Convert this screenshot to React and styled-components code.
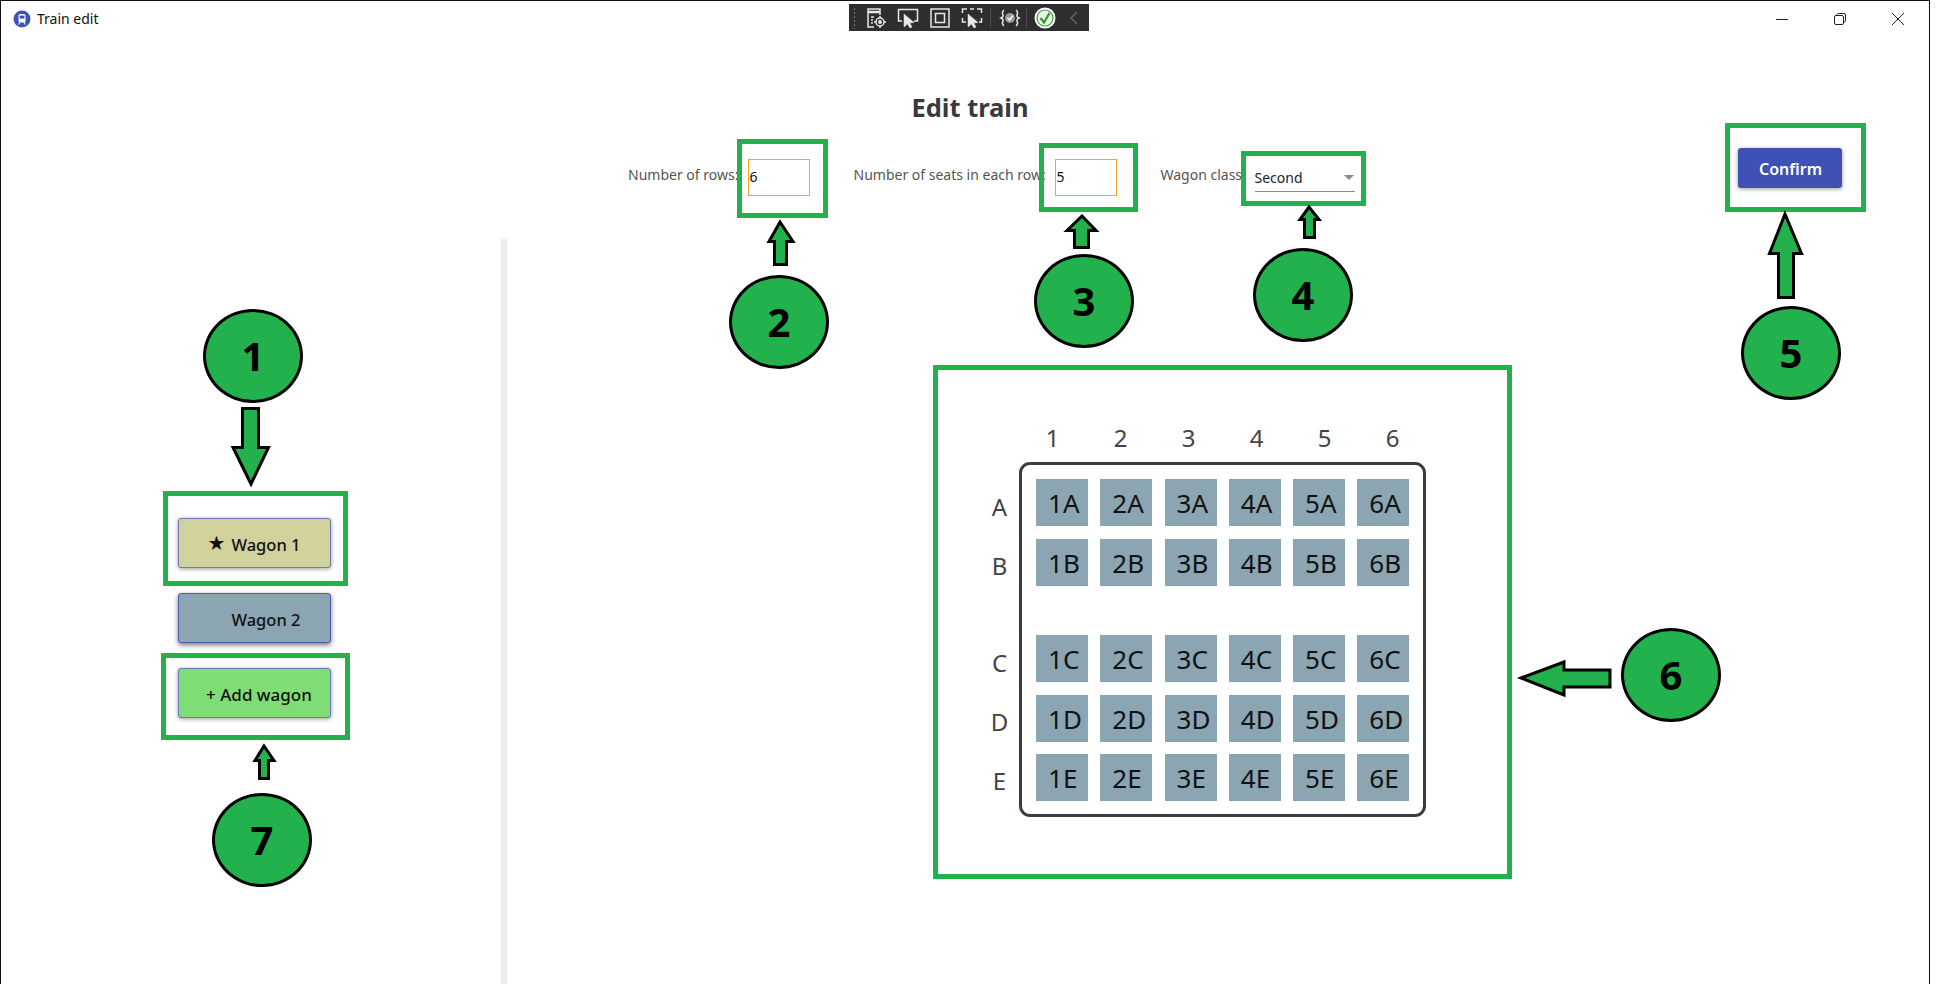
import styled, { createGlobalStyle } from "styled-components";

const GREEN = "#22b14c";
const FONT = '"Noto Sans", "Open Sans", sans-serif';

const GlobalStyle = createGlobalStyle`
  html, body {
    margin: 0;
    background: #fff;
    overflow: hidden;
  }
`;

const Page = styled.div`
  position: relative;
  width: 1936px;
  height: 984px;
  font-family: ${FONT};
  background: #fff;
`;

const Window = styled.div`
  box-sizing: border-box;
  width: 1930px;
  height: 984px;
  border: 1.5px solid #111;
  border-bottom: none;
  display: flex;
  flex-direction: column;
  overflow: hidden;
`;

const TitleBar = styled.div`
  height: 35px;
  flex: none;
  display: flex;
  align-items: center;
  padding-left: 12px;
`;

const AppIcon = styled.svg`
  width: 18px;
  height: 18px;
  margin-right: 6px;
`;

const AppName = styled.span`
  font-size: 14px;
  color: #111;
`;

const WindowControls = styled.div`
  margin-left: auto;
  display: flex;
  align-items: center;
  padding-right: 23px;
  gap: 42px;
`;

const ControlIcon = styled.svg`
  width: 16px;
  height: 16px;
  fill: none;
  stroke: #222;
  stroke-width: 1;
`;

const DebugBar = styled.div`
  position: absolute;
  top: 4px;
  left: 849px;
  width: 240px;
  height: 27px;
  background: #2e2e30;
  display: flex;
  align-items: center;
  padding-left: 4px;
  box-sizing: border-box;
`;

const Grip = styled.div`
  width: 7px;
  height: 22px;
  margin-right: 9.5px;
  background-image: radial-gradient(#77777a 0.8px, transparent 1px);
  background-size: 3px 4px;
`;

const DebugIcon = styled.svg`
  width: 22px;
  height: 22px;
  flex: none;
  margin-right: ${(p) => p.$gap ?? 10}px;
  fill: none;
  stroke: ${(p) => p.$stroke ?? "#e8e8e8"};
  stroke-width: 1.5;
`;

const DebugSep = styled.div`
  width: 1px;
  height: 20px;
  background: #4c4c50;
  margin-right: 8px;
`;

const Heading = styled.h1`
  margin: 54px 0 0;
  text-align: center;
  padding-left: 10px;
  font-size: 25.5px;
  line-height: 35px;
  font-weight: 700;
  color: #3a3a3a;
`;

const ControlRow = styled.div`
  margin-top: 23px;
  height: 40px;
  display: flex;
  align-items: flex-start;
  padding-left: 626px;
`;

const Field = styled.div`
  display: flex;
  align-items: center;
  height: 37px;
  margin-top: 11px;
  margin-right: 43px;
`;

const FieldLabel = styled.span`
  width: ${(p) => p.$width}px;
  flex: none;
  white-space: nowrap;
  font-size: 14px;
  color: #555;
  margin: -6px 0 0 1px;
`;

const NumberInput = styled.div`
  box-sizing: border-box;
  width: 62px;
  height: 37px;
  border: 1px solid #f5a623;
  padding-left: 1px;
  font-size: 14px;
  line-height: 33px;
  color: #111;
`;

const SelectBox = styled.div`
  box-sizing: border-box;
  width: 100px;
  height: 29px;
  align-self: flex-start;
  margin-top: 4px;
  border-bottom: 1px solid #8a8a8a;
  display: flex;
  align-items: center;
  justify-content: space-between;
  font-size: 14px;
  color: #222;
`;

const Caret = styled.span`
  width: 0;
  height: 0;
  margin-right: 1px;
  border-left: 5px solid transparent;
  border-right: 5px solid transparent;
  border-top: 5px solid #8a8a8a;
`;

const ConfirmButton = styled.button`
  box-sizing: border-box;
  width: 104px;
  height: 40px;
  margin-left: auto;
  margin-right: 87px;
  padding: 2px 0 0 1px;
  border: none;
  border-radius: 3px;
  background: #3f51b5;
  color: #fff;
  font-family: ${FONT};
  font-size: 16px;
  font-weight: 600;
  box-shadow: 0 1px 4px rgba(0, 0, 0, 0.4);
`;

const Body = styled.div`
  margin-top: 51px;
  flex: 1;
  display: flex;
`;

const Sidebar = styled.div`
  box-sizing: border-box;
  width: 505.5px;
  flex: none;
  border-right: 6px solid #ececec;
  padding: 279px 0 0 176.5px;
  display: flex;
  flex-direction: column;
  gap: 25px;
`;

const WagonButton = styled.button`
  box-sizing: border-box;
  width: 153px;
  height: 50px;
  border: 1px solid ${(p) => (p.$current ? "#4f5ca8" : "#6a76bd")};
  border-radius: 3px;
  background: ${(p) => p.$color};
  box-shadow: 0 ${(p) => (p.$current ? "2px 5px rgba(0, 0, 0, 0.55)" : "1px 4px rgba(0, 0, 0, 0.4)")};
  font-family: ${FONT};
  font-size: 16.5px;
  font-weight: 500;
  color: #111;
  display: flex;
  align-items: center;
  justify-content: center;
  padding: 2px 0 0;
  gap: 6px;
`;

const AddButton = styled(WagonButton)`
  font-size: 17px;
  padding-left: 10px;
`;

const Star = styled.span`
  width: 18px;
  font-size: 20px;
  line-height: 1;
  margin-top: -3px;
  font-family: "DejaVu Sans", sans-serif;
  visibility: ${(p) => (p.$hidden ? "hidden" : "visible")};
`;

const SeatArea = styled.div`
  flex: 1;
  padding: 184px 0 0 474px;
`;

const SeatLayout = styled.div`
  display: grid;
  grid-template-columns: 38px 407px;
  grid-template-rows: 30px 355px;
  row-gap: 9px;
`;

const ColumnHeader = styled.div`
  grid-column: 2;
  display: flex;
`;

const ColumnLabel = styled.span`
  width: 68px;
  flex: none;
  text-align: center;
  font-size: 24px;
  line-height: 30px;
  color: #444;
`;

const RowLabels = styled.div`
  padding-top: 15px;
  display: flex;
  flex-direction: column;
`;

const RowLabel = styled.span`
  height: 59px;
  margin-top: ${(p) => (p.$aisle ? 38 : 0)}px;
  line-height: 59px;
  text-align: center;
  font-size: 24px;
  color: #444;
`;

const SeatPanel = styled.div`
  box-sizing: border-box;
  border: 3px solid #3b3b47;
  border-radius: 11px;
  padding: 14px 0 0 14.5px;
  display: flex;
  flex-direction: column;
  gap: 12.5px;
`;

const SeatRow = styled.div`
  display: flex;
  gap: 12.25px;
  margin-top: ${(p) => (p.$aisle ? 37 : 0)}px;
`;

const Seat = styled.div`
  width: 52px;
  height: 47px;
  background: #8ba5b2;
  box-sizing: border-box;
  padding-left: 12px;
  font-size: 26px;
  line-height: 48px;
  color: #111;
`;

const Highlight = styled.div`
  position: absolute;
  box-sizing: border-box;
  left: ${(p) => p.$x}px;
  top: ${(p) => p.$y}px;
  width: ${(p) => p.$w}px;
  height: ${(p) => p.$h}px;
  border: 5px solid ${GREEN};
`;

const Callout = styled.div`
  position: absolute;
  box-sizing: border-box;
  left: ${(p) => p.$x}px;
  top: ${(p) => p.$y}px;
  width: 100px;
  height: 94px;
  padding-bottom: 2px;
  border-radius: 50%;
  border: 3px solid #000;
  background: ${GREEN};
  display: flex;
  align-items: center;
  justify-content: center;
  font-size: 40px;
  font-weight: 700;
  color: #000;
`;

const ArrowLayer = styled.svg`
  position: absolute;
  left: 0;
  top: 0;
  width: 1936px;
  height: 984px;
  pointer-events: none;
`;

const rows = ["A", "B", "C", "D", "E"];
const columns = [1, 2, 3, 4, 5, 6];

const highlights = [
  { x: 163, y: 491, w: 185, h: 95 },
  { x: 737, y: 139, w: 91, h: 79 },
  { x: 1039, y: 143, w: 99, h: 69 },
  { x: 1241, y: 151, w: 125, h: 55 },
  { x: 1725, y: 123, w: 141, h: 89 },
  { x: 933, y: 365, w: 579, h: 514 },
  { x: 161, y: 653, w: 189, h: 87 },
];

const callouts = [
  { n: 1, x: 203, y: 309 },
  { n: 2, x: 729, y: 275 },
  { n: 3, x: 1034, y: 254 },
  { n: 4, x: 1253, y: 248 },
  { n: 5, x: 1741, y: 306 },
  { n: 6, x: 1621, y: 628 },
  { n: 7, x: 212, y: 793 },
];

// tip, head base y, head left/right, shaft left/right, tail y
const upArrow = (tx, ty, by, hl, hr, sl, sr, ey) =>
  `${tx},${ty} ${hr},${by} ${sr},${by} ${sr},${ey} ${sl},${ey} ${sl},${by} ${hl},${by}`;

const arrows = [
  upArrow(251, 484, 447.5, 233, 268.5, 242.5, 258.5, 408.5),
  upArrow(780, 222, 241.5, 769, 793, 774.5, 786.5, 264.5),
  upArrow(1082, 216, 230.5, 1067, 1096, 1074.5, 1088.5, 247.5),
  upArrow(1309, 207, 219.5, 1300, 1319, 1304.5, 1314.5, 237.5),
  upArrow(1785, 214, 253.5, 1769.5, 1801.5, 1778.5, 1793.5, 297.5),
  upArrow(264, 746, 760.5, 255, 274, 259.5, 268.5, 778.5),
  "1521,678 1564,662 1564,670 1610,670 1610,687 1564,687 1564,695",
];

const App = () => {
  return (
    <Page>
      <GlobalStyle />
      <Window>
        <TitleBar>
          <AppIcon viewBox="0 0 18 18">
            <circle cx="9" cy="9" r="8.5" fill="#3f51b5" />
            <path d="M5.5 5.5 Q5.5 4 7.5 4 H10.5 Q12.5 4 12.5 5.5 V11.5 Q12.5 12.5 11 12.5 H7 Q5.5 12.5 5.5 11.5 Z" fill="#fff" />
            <rect x="6.6" y="5.6" width="4.8" height="3" fill="#3f51b5" />
            <path d="M7 12.5 L5.5 14.5 M11 12.5 L12.5 14.5" stroke="#fff" strokeWidth="1.1" />
          </AppIcon>
          <AppName>Train edit</AppName>
          <WindowControls>
            <ControlIcon viewBox="0 0 16 16">
              <path d="M2 8.5 H14" />
            </ControlIcon>
            <ControlIcon viewBox="0 0 16 16">
              <rect x="2.5" y="4.5" width="9" height="9" rx="1.5" />
              <path d="M5 4.5 V3.5 Q5 2.5 6.5 2.5 H12 Q13.5 2.5 13.5 4 V9.5 Q13.5 11 12 11" />
            </ControlIcon>
            <ControlIcon viewBox="0 0 16 16">
              <path d="M2 2 L14 14 M14 2 L2 14" />
            </ControlIcon>
          </WindowControls>
        </TitleBar>

        <Heading>Edit train</Heading>

        <ControlRow>
          <Field>
            <FieldLabel $width={119.5}>Number of rows:</FieldLabel>
            <NumberInput>6</NumberInput>
          </Field>
          <Field>
            <FieldLabel $width={201}>Number of seats in each row:</FieldLabel>
            <NumberInput>5</NumberInput>
          </Field>
          <Field>
            <FieldLabel $width={94}>Wagon class</FieldLabel>
            <SelectBox>
              Second
              <Caret />
            </SelectBox>
          </Field>
          <ConfirmButton>Confirm</ConfirmButton>
        </ControlRow>

        <Body>
          <Sidebar>
            <WagonButton $color="#d1d19c">
              <Star>★</Star>
              Wagon 1
            </WagonButton>
            <WagonButton $color="#8ba5b2" $current>
              <Star $hidden>★</Star>
              Wagon 2
            </WagonButton>
            <AddButton $color="#7fdd75">+ Add wagon</AddButton>
          </Sidebar>

          <SeatArea>
            <SeatLayout>
              <ColumnHeader>
                {columns.map((c) => (
                  <ColumnLabel key={c}>{c}</ColumnLabel>
                ))}
              </ColumnHeader>
              <RowLabels>
                {rows.map((r) => (
                  <RowLabel key={r} $aisle={r === "C"}>
                    {r}
                  </RowLabel>
                ))}
              </RowLabels>
              <SeatPanel>
                {rows.map((r) => (
                  <SeatRow key={r} $aisle={r === "C"}>
                    {columns.map((c) => (
                      <Seat key={c}>
                        {c}
                        {r}
                      </Seat>
                    ))}
                  </SeatRow>
                ))}
              </SeatPanel>
            </SeatLayout>
          </SeatArea>
        </Body>
      </Window>

      <DebugBar>
        <Grip />
        <DebugIcon viewBox="0 0 22 22">
          <path d="M9 20 H3 V2 H15 V8" />
          <path d="M3 5 H15" strokeWidth="2.5" />
          <path d="M6 10 H9 M6 13 H8 M6 16 H8" />
          <circle cx="15" cy="15" r="4" />
          <circle cx="15" cy="15" r="1.2" fill="#e8e8e8" />
          <path d="M15 9 V11 M15 19 V21 M9 15 H11 M19 15 H21" />
        </DebugIcon>
        <DebugIcon viewBox="0 0 22 22">
          <path d="M5 14 H1.5 V2.5 H20.5 V14 H17" />
          <path d="M7 7 L7 20 L10.5 17 L13 21 L15 20 L12.8 16 L17 15.5 Z" fill="#e8e8e8" strokeWidth="0.5" />
        </DebugIcon>
        <DebugIcon viewBox="0 0 22 22">
          <rect x="2" y="2" width="18" height="18" />
          <rect x="6.5" y="6.5" width="9" height="9" />
        </DebugIcon>
        <DebugIcon viewBox="0 0 22 22" $gap={7}>
          <path d="M6 2 H1.5 V6 M16 2 H20.5 V6 M1.5 11 V15 H5 M20.5 11 V15 H18 M9 2 H13" />
          <path d="M7 7 L7 20 L10.5 17 L13 21 L15 20 L12.8 16 L17 15.5 Z" fill="#e8e8e8" strokeWidth="0.5" />
        </DebugIcon>
        <DebugSep />
        <DebugIcon viewBox="0 0 22 22" $gap={5}>
          <path d="M5 3 Q2.5 5 4 8 Q4.5 10 2 11 Q4.5 12 4 14 Q2.5 17 5 19" />
          <path d="M17 3 Q19.5 5 18 8 Q17.5 10 20 11 Q17.5 12 18 14 Q19.5 17 17 19" />
          <circle cx="11" cy="11" r="5" fill="#9a9a9a" stroke="none" />
          <path d="M8.5 11 L10.5 13 L14 8.5" stroke="#fff" />
        </DebugIcon>
        <DebugSep />
        <DebugIcon viewBox="0 0 22 22" $gap={11} $stroke="none">
          <circle cx="11" cy="11" r="10.5" fill="#fff" />
          <circle cx="11" cy="11" r="8.6" fill="#3f9b3f" />
          <circle cx="11" cy="11" r="7.4" fill="#e9f5e6" />
          <path d="M6.5 11 L10 15.5 L15.5 6" fill="none" stroke="#2d9a2d" strokeWidth="2.2" />
        </DebugIcon>
        <DebugIcon viewBox="0 0 22 22" $gap={0} $stroke="#666">
          <path d="M10 5 L4 11 L10 17" />
        </DebugIcon>
      </DebugBar>

      {highlights.map((h) => (
        <Highlight key={`${h.x}-${h.y}`} $x={h.x} $y={h.y} $w={h.w} $h={h.h} />
      ))}

      <ArrowLayer viewBox="0 0 1936 984">
        {arrows.map((points) => (
          <polygon key={points} points={points} fill={GREEN} stroke="#000" strokeWidth="3" />
        ))}
      </ArrowLayer>

      {callouts.map((c) => (
        <Callout key={c.n} $x={c.x} $y={c.y}>
          {c.n}
        </Callout>
      ))}
    </Page>
  );
};

export default App;
